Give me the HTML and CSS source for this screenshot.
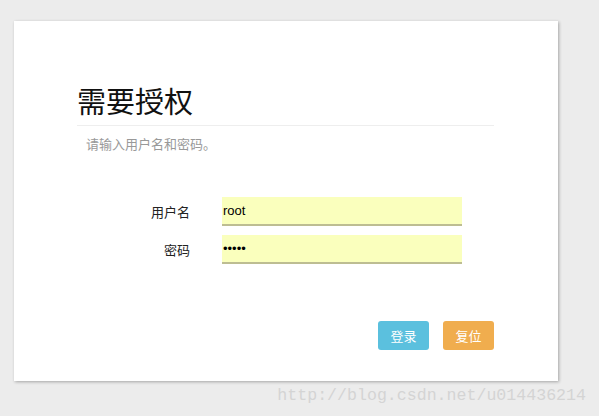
FILE: index.html
```html
<!DOCTYPE html>
<html lang="zh-CN">

<head>
    <meta charset="UTF-8">
    <meta name="viewport" content="width=device-width, initial-scale=1.0">
    <title>需要授权</title>
    <link rel="stylesheet" href="styles.css">
</head>

<body>
    <div class="card">
        <div class="inner">
            <h2 class="title">需要授权</h2>
            <p class="hint">请输入用户名和密码。</p>

            <form class="fields">
                <div class="row">
                    <label for="username">用户名</label>
                    <input type="text" id="username" name="username" value="root">
                </div>
                <div class="row">
                    <label for="password">密码</label>
                    <input type="password" id="password" name="password" value="admin">
                </div>
            </form>

            <div class="actions">
                <button class="btn login">登录</button>
                <button class="btn reset">复位</button>
            </div>
        </div>
    </div>

    <div class="mark">http://blog.csdn.net/u014436214</div>
</body>

</html>
```

FILE: styles.css
```css
body {
    margin: 0;
    padding: 0;
    background-color: #ececec;
    font-family: "Liberation Sans", "Noto Sans CJK SC", sans-serif;
}

.card {
    background-color: #fff;
    width: 544px;
    height: 360px;
    box-sizing: border-box;
    margin: 21px 0 0 14px;
    padding: 64px 0 0 63px;
    box-shadow: 1px 1px 3px rgba(0, 0, 0, 0.3);
}

.inner {
    width: 417px;
}

.title {
    font-family: "Noto Sans CJK SC", sans-serif;
    font-size: 29px;
    font-weight: normal;
    line-height: 30px;
    color: #111;
    margin: 0;
    padding: 0 0 10px 0;
    border-bottom: 1px solid #eee;
}

.hint {
    font-family: "Noto Sans CJK SC", sans-serif;
    font-size: 13px;
    line-height: 18px;
    color: #999;
    margin: 9px 0 0 0;
    padding-left: 9px;
}

.fields {
    margin-top: 44px;
    display: flex;
    flex-direction: column;
    gap: 9px;
}

.row {
    display: flex;
    align-items: center;
    gap: 32px;
}

.row label {
    width: 113px;
    text-align: right;
    font-family: "Noto Sans CJK SC", sans-serif;
    font-size: 13px;
    color: #222;
}

.row input {
    width: 240px;
    height: 29px;
    box-sizing: border-box;
    margin: 0;
    padding: 0 1px;
    border: none;
    border-bottom: 2px solid #bdbd92;
    background-color: #faffbd;
    font-family: "Liberation Sans", sans-serif;
    font-size: 13px;
    color: #000;
    outline: none;
}

.actions {
    margin-top: 57px;
    display: flex;
    justify-content: flex-end;
    gap: 14px;
}

.btn {
    width: 51px;
    height: 29px;
    border: none;
    border-radius: 3px;
    color: #fff;
    font-family: "Noto Sans CJK SC", sans-serif;
    font-size: 13px;
    padding: 0;
    cursor: pointer;
}

.login {
    background-color: #5bc0de;
}

.reset {
    background-color: #f0ad4e;
}

.mark {
    margin-top: 5px;
    padding-right: 13px;
    text-align: right;
    font-family: "Liberation Mono", monospace;
    font-size: 16.6px;
    line-height: 20px;
    color: #d4d4d4;
}
```
